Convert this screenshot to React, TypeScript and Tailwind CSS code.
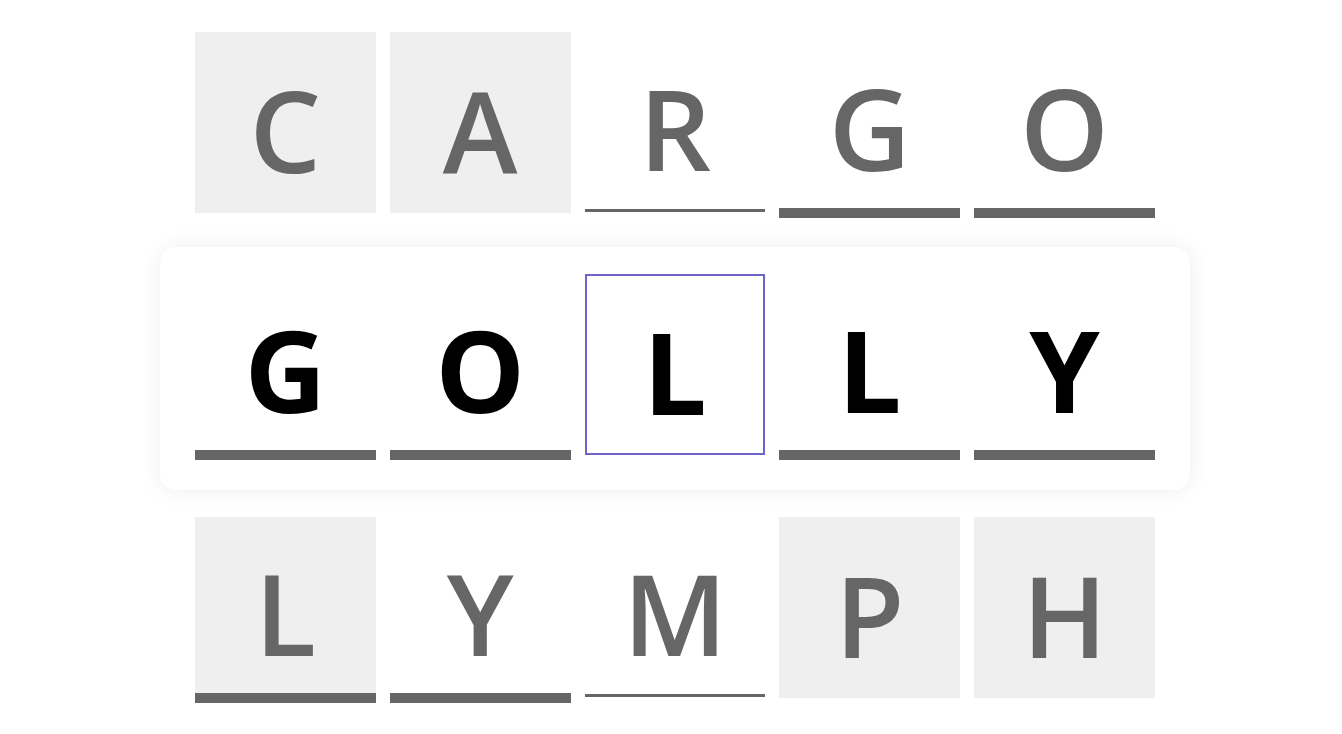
type Mark = "none" | "thin" | "thick";

type Cell = { letter: string; filled?: boolean; mark: Mark; active?: boolean };

const top: Cell[] = [
  { letter: "C", filled: true, mark: "none" },
  { letter: "A", filled: true, mark: "none" },
  { letter: "R", mark: "thin" },
  { letter: "G", mark: "thick" },
  { letter: "O", mark: "thick" },
];

const current: Cell[] = [
  { letter: "G", mark: "thick" },
  { letter: "O", mark: "thick" },
  { letter: "L", mark: "none", active: true },
  { letter: "L", mark: "thick" },
  { letter: "Y", mark: "thick" },
];

const bottom: Cell[] = [
  { letter: "L", filled: true, mark: "thick" },
  { letter: "Y", mark: "thick" },
  { letter: "M", mark: "thin" },
  { letter: "P", filled: true, mark: "none" },
  { letter: "H", filled: true, mark: "none" },
];

function Tile({ cell, bold }: { cell: Cell; bold?: boolean }) {
  const boxH = cell.mark === "none" ? "h-[181px]" : "h-[176px]";
  return (
    <div className="flex w-[181px] flex-col">
      <div
        className={`flex ${boxH} items-center justify-center pt-[14px] ${
          cell.filled ? "bg-[#efefef]" : ""
        } ${cell.active ? "border-2 border-[#6f64c8]" : ""} ${
          bold ? "font-bold text-black" : "font-semibold text-[#666666]"
        } text-[113px] leading-none`}
      >
        {cell.letter}
      </div>
      {cell.mark === "thick" && <div className="h-[10px] bg-[#666666]" />}
      {cell.mark === "thin" && <div className="mt-[1px] h-[3px] bg-[#666666]" />}
    </div>
  );
}

function Row({ cells, bold }: { cells: Cell[]; bold?: boolean }) {
  return (
    <div className="flex items-start gap-[14px]">
      {cells.map((c, i) => (
        <Tile key={i} cell={c} bold={bold} />
      ))}
    </div>
  );
}

export default function App() {
  return (
    <div
      className="min-h-screen bg-white pl-[160px] pt-[32px]"
      style={{ fontFamily: '"Open Sans", "Noto Sans", sans-serif' }}
    >
      <div className="flex w-[1030px] flex-col">
        <div className="h-[215px] px-[35px]">
          <Row cells={top} />
        </div>
        <div className="rounded-[16px] bg-white px-[35px] pt-[27px] pb-[30px] shadow-[0_0_22px_rgba(0,0,0,0.07)]">
          <Row cells={current} bold />
        </div>
        <div className="px-[35px] pt-[27px]">
          <Row cells={bottom} />
        </div>
      </div>
    </div>
  );
}
